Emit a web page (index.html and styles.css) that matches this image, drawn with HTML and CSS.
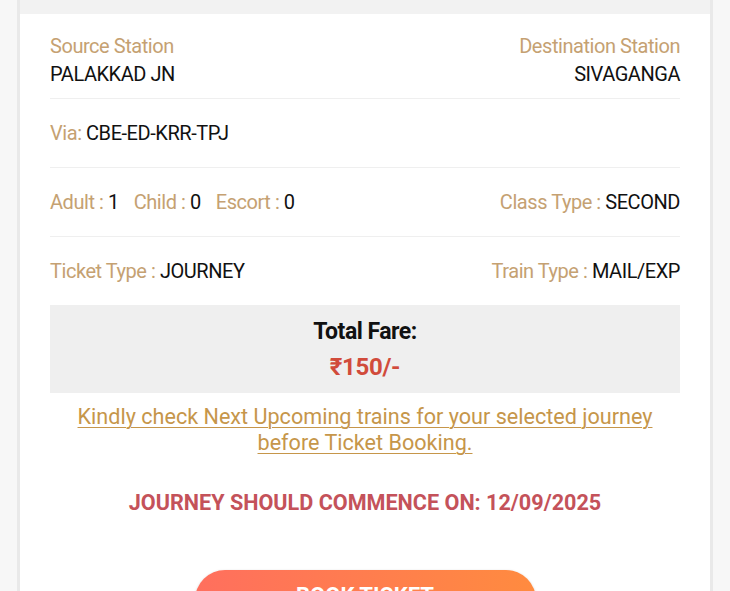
FILE: index.html
```html
<!DOCTYPE html>
<html>
<head>
<meta charset="utf-8">
<link rel="stylesheet" href="styles.css">
</head>
<body>
<div class="page">
  <div class="card">
    <div class="card-top"></div>
    <div class="card-body">
      <div class="row row-stations">
        <div class="col">
          <div class="label">Source Station</div>
          <div class="value">PALAKKAD JN</div>
        </div>
        <div class="col col-right">
          <div class="label">Destination Station</div>
          <div class="value">SIVAGANGA</div>
        </div>
      </div>
      <div class="row">
        <div><span class="label">Via: </span><span class="value">CBE-ED-KRR-TPJ</span></div>
      </div>
      <div class="row">
        <div class="pax">
          <span><span class="label">Adult : </span><span class="value">1</span></span>
          <span><span class="label">Child : </span><span class="value">0</span></span>
          <span><span class="label">Escort : </span><span class="value">0</span></span>
        </div>
        <div><span class="label">Class Type : </span><span class="value">SECOND</span></div>
      </div>
      <div class="row row-last">
        <div><span class="label">Ticket Type : </span><span class="value">JOURNEY</span></div>
        <div><span class="label">Train Type : </span><span class="value">MAIL/EXP</span></div>
      </div>
      <div class="fare">
        <div class="fare-title">Total Fare:</div>
        <div class="fare-amount">₹150/-</div>
      </div>
      <a class="notice" href="#">Kindly check Next Upcoming trains for your selected journey before Ticket Booking.</a>
      <div class="commence">JOURNEY SHOULD COMMENCE ON: 12/09/2025</div>
      <div class="btn-wrap"><button class="btn">BOOK TICKET</button></div>
    </div>
  </div>
</div>
</body>
</html>
```
FILE: styles.css
```css
* { box-sizing: border-box; }
html, body { margin: 0; padding: 0; }
body {
  background: #f7f7f7;
  font-family: Roboto, "Noto Sans", sans-serif;
  width: 730px;
  height: 591px;
  overflow: hidden;
}
.page {
  padding: 0 17px 0 17px;
}
.card {
  background: #fff;
  border-left: 3px solid #e9e9e9;
  border-right: 3px solid #e9e9e9;
  min-height: 591px;
}
.card-top {
  height: 14px;
  background: #f2f2f2;
}
.card-body {
  padding: 0 30px;
}
.row {
  display: flex;
  justify-content: space-between;
  align-items: center;
  height: 69px;
  border-bottom: 1px solid #efefef;
  font-size: 20px;
  letter-spacing: -0.45px;
}
.row-stations {
  height: 85px;
  align-items: flex-start;
  padding-top: 20px;
  line-height: 24px;
}
.row-last {
  border-bottom: none;
  height: 68px;
}
.col-right { text-align: right; }
.label { color: #c5a172; }
.value { color: #111; }
.row-stations .value { margin-top: 4px; }
.pax { display: flex; gap: 15px; }
.fare {
  background: #efefef;
  height: 88px;
  text-align: center;
  padding-top: 13px;
}
.fare-title {
  font-size: 23px;
  font-weight: 700;
  color: #111;
  line-height: 27px;
  letter-spacing: -0.5px;
}
.fare-amount {
  font-size: 24px;
  font-weight: 700;
  color: #d14b3b;
  line-height: 27px;
  margin-top: 9px;
  letter-spacing: -0.3px;
}
.notice {
  display: block;
  text-align: center;
  color: #c6964a;
  font-size: 21.6px;
  line-height: 26px;
  margin-top: 11px;
  padding: 0 10px;
  text-decoration: underline;
  text-decoration-thickness: 1px;
  text-underline-offset: 3px;
}
.commence {
  text-align: center;
  color: #c4525a;
  font-size: 21.6px;
  font-weight: 700;
  margin-top: 34px;
  line-height: 26px;
}
.btn-wrap {
  display: flex;
  justify-content: center;
  margin-top: 54px;
}
.btn {
  width: 341px;
  height: 60px;
  padding: 0 0 10px 0;
  border: none;
  border-radius: 30px;
  background: linear-gradient(90deg, #ff6f5e, #ff8b3f);
  color: #fff;
  font-family: Roboto, sans-serif;
  font-size: 22px;
  font-weight: 700;
  box-shadow: 0 1px 3px rgba(0,0,0,0.2);
}
```
